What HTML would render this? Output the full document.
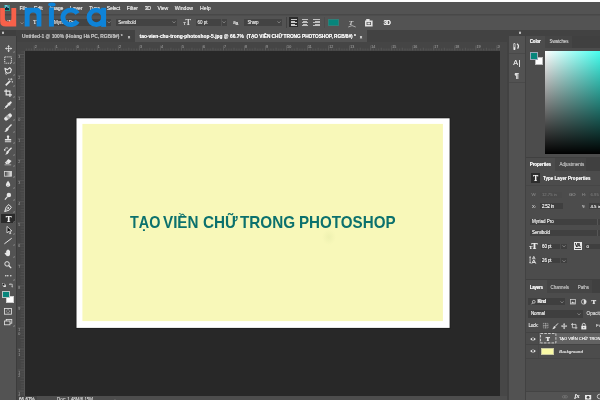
<!DOCTYPE html>
<html>
<head>
<meta charset="utf-8">
<title>Photoshop</title>
<style>
*{margin:0;padding:0;box-sizing:border-box;}
html,body{width:600px;height:400px;overflow:hidden;background:#fff;}
body{position:relative;font-family:"Liberation Sans",sans-serif;color:#ddd;}
#root{position:absolute;left:0;top:0;width:600px;height:400px;overflow:hidden;will-change:transform;}
.a{position:absolute;}
.t{position:absolute;white-space:nowrap;color:#d6d6d6;font-size:5.5px;text-shadow:0 0 0.6px currentColor;}
svg{overflow:visible;}
</style>
</head>
<body>
<div id="root">
<div class="a" style="left:0px;top:0px;width:600px;height:2px;background:#fff;"></div>
<div class="a" style="left:0px;top:2px;width:600px;height:398px;background:#535353;"></div>
<div class="a" style="left:0px;top:2px;width:600px;height:12.6px;background:#535353;"></div>
<div class="a" style="left:0px;top:14px;width:600px;height:1px;background:#484848;"></div>
<div class="a" style="left:0px;top:15px;width:600px;height:1px;background:#4d4d4d;"></div>
<div class="a" style="left:0px;top:15.5px;width:600px;height:14.5px;background:#535353;"></div>
<div class="t" style="left:19.4px;top:5.08px;font-size:5.2px;line-height:6.24px;color:#e6e6e6;letter-spacing:-0.095px;">File</div>
<div class="t" style="left:34.1px;top:5.08px;font-size:5.2px;line-height:6.24px;color:#e6e6e6;letter-spacing:-0.090px;">Edit</div>
<div class="t" style="left:49.4px;top:5.08px;font-size:5.2px;line-height:6.24px;color:#e6e6e6;letter-spacing:-0.111px;">Image</div>
<div class="t" style="left:70px;top:5.08px;font-size:5.2px;line-height:6.24px;color:#e6e6e6;letter-spacing:-0.102px;">Layer</div>
<div class="t" style="left:89.2px;top:5.08px;font-size:5.2px;line-height:6.24px;color:#e6e6e6;letter-spacing:-0.118px;">Type</div>
<div class="t" style="left:106.7px;top:5.08px;font-size:5.2px;line-height:6.24px;color:#e6e6e6;letter-spacing:-0.192px;">Select</div>
<div class="t" style="left:126.7px;top:5.08px;font-size:5.2px;line-height:6.24px;color:#e6e6e6;letter-spacing:-0.043px;">Filter</div>
<div class="t" style="left:144.7px;top:5.08px;font-size:5.2px;line-height:6.24px;color:#e6e6e6;letter-spacing:-0.274px;">3D</div>
<div class="t" style="left:157.5px;top:5.08px;font-size:5.2px;line-height:6.24px;color:#e6e6e6;letter-spacing:-0.094px;">View</div>
<div class="t" style="left:174.7px;top:5.08px;font-size:5.2px;line-height:6.24px;color:#e6e6e6;letter-spacing:-0.032px;">Window</div>
<div class="t" style="left:200px;top:5.08px;font-size:5.2px;line-height:6.24px;color:#e6e6e6;letter-spacing:0.026px;">Help</div>
<div class="a" style="left:4.2px;top:5px;width:5.6px;height:5.5px;background:#0a2d3e;border:0.8px solid #2a9488;"></div>
<div class="t" style="left:5.2px;top:5.88px;font-size:3.2px;line-height:3.84px;color:#7fd0f0;font-weight:bold;">Ps</div>
<div class="t" style="left:7.6px;top:17.70px;font-size:6.5px;line-height:7.80px;color:#d8d8d8;font-family:'Liberation Serif',serif;">T</div>
<svg class="a" style="left:19.6px;top:22.4px;" width="4" height="2.4" viewBox="0 0 4 2.4"><path d="M0.4 0.4 L2 1.9 L3.6 0.4" fill="none" stroke="#a4a4a4" stroke-width="0.6"/></svg>
<div class="t" style="left:33px;top:18.70px;font-size:6px;line-height:7.20px;color:#dcdcdc;font-family:'Liberation Serif',serif;">T</div>
<div class="a" style="left:50px;top:18.5px;width:61.2px;height:7.3px;background:#434343;"></div>
<div class="t" style="left:54px;top:19.60px;font-size:4.5px;line-height:5.40px;color:#dcdcdc;letter-spacing:0.004px;">Myriad Pro</div>
<svg class="a" style="left:106.5px;top:21.3px;" width="4" height="2.4" viewBox="0 0 4 2.4"><path d="M0.4 0.4 L2 1.9 L3.6 0.4" fill="none" stroke="#a4a4a4" stroke-width="0.6"/></svg>
<div class="a" style="left:115.8px;top:18.5px;width:61.2px;height:7.3px;background:#434343;"></div>
<div class="t" style="left:118.3px;top:19.60px;font-size:4.5px;line-height:5.40px;color:#dcdcdc;letter-spacing:-0.158px;">Semibold</div>
<svg class="a" style="left:172px;top:21.3px;" width="4" height="2.4" viewBox="0 0 4 2.4"><path d="M0.4 0.4 L2 1.9 L3.6 0.4" fill="none" stroke="#a4a4a4" stroke-width="0.6"/></svg>
<div class="t" style="left:183.2px;top:20.90px;font-size:4.5px;line-height:5.40px;color:#dcdcdc;font-family:'Liberation Serif',serif;">T</div>
<div class="t" style="left:185.6px;top:16.60px;font-size:9px;line-height:10.80px;color:#dcdcdc;font-family:'Liberation Serif',serif;">T</div>
<div class="a" style="left:195.8px;top:18.5px;width:25px;height:7.3px;background:#434343;"></div>
<div class="t" style="left:197.5px;top:19.60px;font-size:4.5px;line-height:5.40px;color:#dcdcdc;letter-spacing:-0.002px;">60 pt</div>
<div class="a" style="left:221.7px;top:18.5px;width:5px;height:7.3px;background:#434343;"></div>
<svg class="a" style="left:222.3px;top:21.3px;" width="4" height="2.4" viewBox="0 0 4 2.4"><path d="M0.4 0.4 L2 1.9 L3.6 0.4" fill="none" stroke="#a4a4a4" stroke-width="0.6"/></svg>
<div class="t" style="left:233px;top:19.00px;font-size:5px;line-height:6.00px;color:#cfcfcf;">a</div>
<div class="t" style="left:235.6px;top:20.00px;font-size:5px;line-height:6.00px;color:#cfcfcf;font-weight:bold;">a</div>
<div class="a" style="left:244.2px;top:18.5px;width:37.8px;height:7.3px;background:#434343;"></div>
<div class="t" style="left:247.5px;top:19.60px;font-size:4.5px;line-height:5.40px;color:#dcdcdc;letter-spacing:-0.242px;">Sharp</div>
<svg class="a" style="left:277px;top:21.3px;" width="4" height="2.4" viewBox="0 0 4 2.4"><path d="M0.4 0.4 L2 1.9 L3.6 0.4" fill="none" stroke="#a4a4a4" stroke-width="0.6"/></svg>
<div class="a" style="left:285.6px;top:16.5px;width:0.8px;height:11px;background:#424242;"></div>
<div class="a" style="left:289.2px;top:16.7px;width:9.1px;height:10.8px;background:#2c2c2c;"></div>
<div class="a" style="left:291px;top:19.2px;width:6px;height:0.9px;background:#c8c8c8;"></div>
<div class="a" style="left:291px;top:20.7px;width:4px;height:0.9px;background:#c8c8c8;"></div>
<div class="a" style="left:291px;top:22.2px;width:6px;height:0.9px;background:#c8c8c8;"></div>
<div class="a" style="left:291px;top:23.7px;width:4px;height:0.9px;background:#c8c8c8;"></div>
<div class="a" style="left:291px;top:25.2px;width:6px;height:0.9px;background:#c8c8c8;"></div>
<div class="a" style="left:301.8px;top:19.2px;width:6.4px;height:0.9px;background:#c0c0c0;"></div>
<div class="a" style="left:302.8px;top:20.7px;width:4.4px;height:0.9px;background:#c0c0c0;"></div>
<div class="a" style="left:301.8px;top:22.2px;width:6.4px;height:0.9px;background:#c0c0c0;"></div>
<div class="a" style="left:302.8px;top:23.7px;width:4.4px;height:0.9px;background:#c0c0c0;"></div>
<div class="a" style="left:301.8px;top:25.2px;width:6.4px;height:0.9px;background:#c0c0c0;"></div>
<div class="a" style="left:313.4px;top:19.2px;width:6.4px;height:0.9px;background:#c0c0c0;"></div>
<div class="a" style="left:315.4px;top:20.7px;width:4.4px;height:0.9px;background:#c0c0c0;"></div>
<div class="a" style="left:313.4px;top:22.2px;width:6.4px;height:0.9px;background:#c0c0c0;"></div>
<div class="a" style="left:315.4px;top:23.7px;width:4.4px;height:0.9px;background:#c0c0c0;"></div>
<div class="a" style="left:313.4px;top:25.2px;width:6.4px;height:0.9px;background:#c0c0c0;"></div>
<div class="a" style="left:324px;top:16.5px;width:0.6px;height:11px;background:#4c4c4c;"></div>
<div class="a" style="left:328px;top:18.8px;width:11.1px;height:7.3px;background:#06857b;border:0.5px solid #2f7f78;"></div>
<div class="t" style="left:349px;top:18.60px;font-size:7px;line-height:8.40px;color:#cfcfcf;font-family:'Liberation Serif',serif;font-style:italic;">T</div>
<svg class="a" style="left:347.5px;top:24.5px;" width="8" height="2.5" viewBox="0 0 8 2.5"><path d="M0.3 2 Q4 -0.8 7.7 2" fill="none" stroke="#cfcfcf" stroke-width="0.7"/></svg>
<svg class="a" style="left:365px;top:19.3px;" width="7.6" height="7.4" viewBox="0 0 7.6 7.4"><path d="M1.2 0 h3.4 v1.4 h3 v6 h-7.6 v-6 h1.2z" fill="#e2e2e2"/><rect x="1.6" y="3" width="4.4" height="3" fill="#535353"/><rect x="2.4" y="3.6" width="2.8" height="1.8" fill="#e2e2e2"/></svg>
<div class="t" style="left:383.4px;top:18.86px;font-size:6.4px;line-height:7.68px;color:#e6e6e6;font-weight:bold;letter-spacing:-0.591px;">3D</div>
<div class="a" style="left:0px;top:30px;width:600px;height:12px;background:#424242;"></div>
<div class="a" style="left:0px;top:30px;width:16.3px;height:5.5px;background:#3f3f3f;"></div>
<div class="a" style="left:135px;top:30.3px;width:232px;height:11.7px;background:#535353;"></div>
<div class="t" style="left:22px;top:34.06px;font-size:4.9px;line-height:5.88px;color:#b8b8b8;font-weight:bold;letter-spacing:-0.029px;">Untitled-1 @ 100% (Hoàng Hà PC, RGB/8#) *</div>
<div class="t" style="left:127.4px;top:33.78px;font-size:5.2px;line-height:6.24px;color:#d0d0d0;">×</div>
<div class="t" style="left:139.6px;top:34.06px;font-size:4.9px;line-height:5.88px;color:#f4f4f4;font-weight:bold;letter-spacing:-0.007px;">tao-vien-chu-trong-photoshop-5.jpg @ 66.7%</div>
<div class="t" style="left:246.5px;top:34.12px;font-size:4.8px;line-height:5.76px;color:#f4f4f4;font-weight:bold;letter-spacing:-0.050px;">(TẠO VIỀN CHỮ TRONG PHOTOSHOP, RGB/8#) *</div>
<div class="t" style="left:359.4px;top:33.78px;font-size:5.2px;line-height:6.24px;color:#e0e0e0;">×</div>
<div class="t" style="left:1.8px;top:30.30px;font-size:4.5px;line-height:5.40px;color:#d0d0d0;font-weight:bold;">»</div>
<div class="a" style="left:16.8px;top:42px;width:483.2px;height:8.7px;background:#454545;"></div>
<div class="a" style="left:16.8px;top:42px;width:8px;height:353.5px;background:#454545;"></div>
<svg class="a" style="left:0px;top:0px;" width="600" height="400" viewBox="0 0 600 400"><defs><pattern id="hp" x="75.80" y="42" width="21.03" height="9" patternUnits="userSpaceOnUse"><rect x="0.000" y="3.5" width="0.9" height="5" fill="#5e5e5e"/><rect x="2.629" y="6.6" width="0.9" height="1.9" fill="#585858"/><rect x="5.258" y="6.6" width="0.9" height="1.9" fill="#585858"/><rect x="7.886" y="6.6" width="0.9" height="1.9" fill="#585858"/><rect x="10.515" y="5.8" width="0.9" height="2.7" fill="#585858"/><rect x="13.144" y="6.6" width="0.9" height="1.9" fill="#585858"/><rect x="15.773" y="6.6" width="0.9" height="1.9" fill="#585858"/><rect x="18.401" y="6.6" width="0.9" height="1.9" fill="#585858"/></pattern><pattern id="vp" x="16.8" y="117.20" width="8" height="21.03" patternUnits="userSpaceOnUse"><rect y="0.000" x="1" height="0.9" width="7" fill="#595959"/><rect y="2.629" x="4.2" height="0.9" width="3.8" fill="#525252"/><rect y="5.258" x="4.2" height="0.9" width="3.8" fill="#525252"/><rect y="7.886" x="4.2" height="0.9" width="3.8" fill="#525252"/><rect y="10.515" x="3.4" height="0.9" width="4.6" fill="#525252"/><rect y="13.144" x="4.2" height="0.9" width="3.8" fill="#525252"/><rect y="15.773" x="4.2" height="0.9" width="3.8" fill="#525252"/><rect y="18.401" x="4.2" height="0.9" width="3.8" fill="#525252"/></pattern></defs><rect x="25.4" y="42" width="474.6" height="8.7" fill="url(#hp)"/><rect x="16.8" y="51.4" width="8" height="344" fill="url(#vp)"/></svg>
<div class="a" style="left:24.3px;top:51px;width:0.6px;height:344.8px;background:#555555;"></div>
<div class="t" style="left:34.7px;top:44.78px;font-size:3.7px;line-height:4.44px;color:#8a8a8a;">2</div>
<div class="t" style="left:55.8px;top:44.78px;font-size:3.7px;line-height:4.44px;color:#8a8a8a;">1</div>
<div class="t" style="left:76.8px;top:44.78px;font-size:3.7px;line-height:4.44px;color:#8a8a8a;">0</div>
<div class="t" style="left:97.8px;top:44.78px;font-size:3.7px;line-height:4.44px;color:#8a8a8a;">1</div>
<div class="t" style="left:118.9px;top:44.78px;font-size:3.7px;line-height:4.44px;color:#8a8a8a;">2</div>
<div class="t" style="left:139.9px;top:44.78px;font-size:3.7px;line-height:4.44px;color:#8a8a8a;">3</div>
<div class="t" style="left:160.9px;top:44.78px;font-size:3.7px;line-height:4.44px;color:#8a8a8a;">4</div>
<div class="t" style="left:182.0px;top:44.78px;font-size:3.7px;line-height:4.44px;color:#8a8a8a;">5</div>
<div class="t" style="left:203.0px;top:44.78px;font-size:3.7px;line-height:4.44px;color:#8a8a8a;">6</div>
<div class="t" style="left:224.0px;top:44.78px;font-size:3.7px;line-height:4.44px;color:#8a8a8a;">7</div>
<div class="t" style="left:245.0px;top:44.78px;font-size:3.7px;line-height:4.44px;color:#8a8a8a;">8</div>
<div class="t" style="left:266.1px;top:44.78px;font-size:3.7px;line-height:4.44px;color:#8a8a8a;">9</div>
<div class="t" style="left:287.1px;top:44.78px;font-size:3.7px;line-height:4.44px;color:#8a8a8a;">10</div>
<div class="t" style="left:308.1px;top:44.78px;font-size:3.7px;line-height:4.44px;color:#8a8a8a;">11</div>
<div class="t" style="left:329.2px;top:44.78px;font-size:3.7px;line-height:4.44px;color:#8a8a8a;">12</div>
<div class="t" style="left:350.2px;top:44.78px;font-size:3.7px;line-height:4.44px;color:#8a8a8a;">13</div>
<div class="t" style="left:371.2px;top:44.78px;font-size:3.7px;line-height:4.44px;color:#8a8a8a;">14</div>
<div class="t" style="left:392.3px;top:44.78px;font-size:3.7px;line-height:4.44px;color:#8a8a8a;">15</div>
<div class="t" style="left:413.3px;top:44.78px;font-size:3.7px;line-height:4.44px;color:#8a8a8a;">16</div>
<div class="t" style="left:434.3px;top:44.78px;font-size:3.7px;line-height:4.44px;color:#8a8a8a;">17</div>
<div class="t" style="left:455.3px;top:44.78px;font-size:3.7px;line-height:4.44px;color:#8a8a8a;">18</div>
<div class="t" style="left:476.4px;top:44.78px;font-size:3.7px;line-height:4.44px;color:#8a8a8a;">19</div>
<div class="t" style="left:497.4px;top:44.78px;font-size:3.7px;line-height:4.44px;color:#8a8a8a;">20</div>
<div class="t" style="left:18.2px;top:55.08px;font-size:3.7px;line-height:4.44px;color:#858585;">3</div>
<div class="t" style="left:18.2px;top:76.08px;font-size:3.7px;line-height:4.44px;color:#858585;">2</div>
<div class="t" style="left:18.2px;top:97.18px;font-size:3.7px;line-height:4.44px;color:#858585;">1</div>
<div class="t" style="left:18.2px;top:118.18px;font-size:3.7px;line-height:4.44px;color:#858585;">0</div>
<div class="t" style="left:18.2px;top:139.18px;font-size:3.7px;line-height:4.44px;color:#858585;">1</div>
<div class="t" style="left:18.2px;top:160.28px;font-size:3.7px;line-height:4.44px;color:#858585;">2</div>
<div class="t" style="left:18.2px;top:181.28px;font-size:3.7px;line-height:4.44px;color:#858585;">3</div>
<div class="t" style="left:18.2px;top:202.28px;font-size:3.7px;line-height:4.44px;color:#858585;">4</div>
<div class="t" style="left:18.2px;top:223.38px;font-size:3.7px;line-height:4.44px;color:#858585;">5</div>
<div class="t" style="left:18.2px;top:244.38px;font-size:3.7px;line-height:4.44px;color:#858585;">6</div>
<div class="t" style="left:18.2px;top:265.38px;font-size:3.7px;line-height:4.44px;color:#858585;">7</div>
<div class="t" style="left:18.2px;top:286.38px;font-size:3.7px;line-height:4.44px;color:#858585;">8</div>
<div class="t" style="left:18.2px;top:307.48px;font-size:3.7px;line-height:4.44px;color:#858585;">9</div>
<div class="t" style="left:18.2px;top:328.48px;font-size:3.7px;line-height:4.44px;color:#858585;">1</div>
<div class="t" style="left:18.2px;top:331.78px;font-size:3.7px;line-height:4.44px;color:#858585;">0</div>
<div class="t" style="left:18.2px;top:349.48px;font-size:3.7px;line-height:4.44px;color:#858585;">1</div>
<div class="t" style="left:18.2px;top:352.78px;font-size:3.7px;line-height:4.44px;color:#858585;">1</div>
<div class="t" style="left:18.2px;top:370.58px;font-size:3.7px;line-height:4.44px;color:#858585;">1</div>
<div class="t" style="left:18.2px;top:373.88px;font-size:3.7px;line-height:4.44px;color:#858585;">2</div>
<div class="t" style="left:18.2px;top:391.58px;font-size:3.7px;line-height:4.44px;color:#858585;">1</div>
<div class="t" style="left:18.2px;top:394.88px;font-size:3.7px;line-height:4.44px;color:#858585;">3</div>
<div class="a" style="left:25px;top:51px;width:475px;height:345px;background:#282828;"></div>
<div class="a" style="left:500px;top:42px;width:7px;height:353.5px;background:#474747;"></div>
<div class="a" style="left:16.8px;top:395.8px;width:490.2px;height:4.2px;background:#4d4d4d;"></div>
<div class="a" style="left:16.8px;top:395.8px;width:20px;height:4.2px;background:#444444;"></div>
<div class="t" style="left:19px;top:396.94px;font-size:4.6px;line-height:5.52px;color:#e0e0e0;">66.67%</div>
<div class="t" style="left:57px;top:397.00px;font-size:4.5px;line-height:5.40px;color:#c8c8c8;letter-spacing:-0.048px;">Doc: 1.48M/6.15M</div>
<div class="t" style="left:114.5px;top:396.50px;font-size:5px;line-height:6.00px;color:#c8c8c8;">›</div>
<svg class="a" style="left:0px;top:0px;" width="600" height="400" viewBox="0 0 600 400"><rect x="75.7" y="117.5" width="374.7" height="211.2" fill="#1c1c1c"/><rect x="76.5" y="118.3" width="373.1" height="209.6" fill="#ffffff"/><rect x="82.4" y="123.9" width="360.5" height="197.2" fill="#f8f8b9"/></svg>
<div class="a" style="left:322px;top:229px;width:14px;height:16px;background:radial-gradient(closest-side, rgba(205,218,150,0.22), rgba(205,218,150,0) 100%);"></div>
<div class="a" style="left:129.70px;top:212.8px;font-weight:bold;font-size:16.6px;line-height:20px;color:#0c716d;white-space:nowrap;transform-origin:0 50%;transform:scaleX(0.8676);">TẠO</div>
<div class="a" style="left:163.10px;top:212.8px;font-weight:bold;font-size:16.6px;line-height:20px;color:#0c716d;white-space:nowrap;transform-origin:0 50%;transform:scaleX(0.9162);">VIỀN</div>
<div class="a" style="left:202.90px;top:212.8px;font-weight:bold;font-size:16.6px;line-height:20px;color:#0c716d;white-space:nowrap;transform-origin:0 50%;transform:scaleX(0.9193);">CHỮ</div>
<div class="a" style="left:239.90px;top:212.8px;font-weight:bold;font-size:16.6px;line-height:20px;color:#0c716d;white-space:nowrap;transform-origin:0 50%;transform:scaleX(0.9209);">TRONG</div>
<div class="a" style="left:298.50px;top:212.8px;font-weight:bold;font-size:16.6px;line-height:20px;color:#0c716d;white-space:nowrap;transform-origin:0 50%;transform:scaleX(0.9133);">PHOTOSHOP</div>
<div class="a" style="left:507px;top:30px;width:93px;height:370px;background:#424242;"></div>
<div class="a" style="left:508.5px;top:30px;width:16.5px;height:5.7px;background:#424242;"></div>
<div class="a" style="left:508.5px;top:35.7px;width:16.4px;height:364.3px;background:#525252;"></div>
<div class="t" style="left:518.8px;top:30.10px;font-size:4.5px;line-height:5.40px;color:#d0d0d0;font-weight:bold;">»</div>
<div class="a" style="left:508.5px;top:52.9px;width:16.4px;height:0.7px;background:#494949;"></div>
<div class="a" style="left:508.5px;top:81.5px;width:16.4px;height:0.7px;background:#494949;"></div>
<svg class="a" style="left:513.4px;top:42.6px;" width="6.4" height="7" viewBox="0 0 6.4 7"><rect x="0.4" y="0.3" width="2" height="6.6" rx="0.6" fill="#ececec"/><rect x="0.8" y="1" width="1.2" height="3.2" fill="#8a8a8a"/><path d="M4 0.8 Q6.6 2.6 4.6 5.6" fill="none" stroke="#ececec" stroke-width="1.3"/></svg>
<div class="t" style="left:513.3px;top:59.18px;font-size:7.2px;line-height:8.64px;color:#e0e0e0;">A</div>
<div class="a" style="left:518.9px;top:60px;width:0.7px;height:6.6px;background:#e0e0e0;"></div>
<div class="t" style="left:514.6px;top:70.80px;font-size:8px;line-height:9.60px;color:#e0e0e0;font-weight:bold;">¶</div>
<div class="a" style="left:526.1px;top:30px;width:73.9px;height:5.7px;background:#424242;"></div>
<div class="a" style="left:526.1px;top:35.7px;width:73.9px;height:364.3px;background:#4c4c4c;"></div>
<div class="a" style="left:526.1px;top:35.7px;width:73.9px;height:12px;background:#404040;"></div>
<div class="a" style="left:545.4px;top:35.7px;width:26.6px;height:12px;background:#454545;"></div>
<div class="a" style="left:526.1px;top:35.7px;width:18.9px;height:12px;background:#4c4c4c;"></div>
<div class="t" style="left:529.7px;top:38.80px;font-size:4.5px;line-height:5.40px;color:#f2f2f2;font-weight:bold;letter-spacing:-0.150px;">Color</div>
<div class="t" style="left:549.5px;top:38.90px;font-size:4.5px;line-height:5.40px;color:#c4c4c4;letter-spacing:-0.064px;">Swatches</div>
<div class="a" style="left:534.6px;top:56.8px;width:8px;height:8px;background:#ffffff;border:0.5px solid #bbb;"></div>
<div class="a" style="left:529.8px;top:52px;width:8px;height:7.8px;background:#06857b;border:0.7px solid #9ab;"></div>
<div class="a" style="left:545.3px;top:50.7px;width:54.7px;height:103px;background:linear-gradient(to bottom, rgba(0,0,0,0) 0%, rgba(0,0,0,1) 100%), linear-gradient(to right, #ffffff 0px, #00ffe8 76px);"></div>
<div class="a" style="left:526.1px;top:156.8px;width:73.9px;height:1.2px;background:#404040;"></div>
<div class="a" style="left:526.1px;top:158px;width:73.9px;height:12.5px;background:#404040;"></div>
<div class="a" style="left:555.3px;top:158px;width:31px;height:12.5px;background:#454545;"></div>
<div class="a" style="left:526.1px;top:158px;width:28.5px;height:12.5px;background:#4c4c4c;"></div>
<div class="t" style="left:529.8px;top:161.80px;font-size:4.5px;line-height:5.40px;color:#f2f2f2;font-weight:bold;letter-spacing:-0.106px;">Properties</div>
<div class="t" style="left:559.4px;top:161.80px;font-size:4.5px;line-height:5.40px;color:#bcbcbc;letter-spacing:0.003px;">Adjustments</div>
<div class="a" style="left:531.2px;top:173.4px;width:8.8px;height:9.4px;background:#2d2d2d;"></div>
<div class="t" style="left:533.1px;top:173.62px;font-size:7.8px;line-height:9.36px;color:#f4f4f4;font-family:'Liberation Serif',serif;font-weight:bold;">T</div>
<div class="t" style="left:543px;top:175.90px;font-size:4.5px;line-height:5.40px;color:#f0f0f0;font-weight:bold;letter-spacing:0.032px;">Type Layer Properties</div>
<div class="a" style="left:526.1px;top:184.9px;width:73.9px;height:0.7px;background:#464646;"></div>
<div class="t" style="left:531.4px;top:192.08px;font-size:4.2px;line-height:5.04px;color:#7c7c7c;">W:</div>
<div class="a" style="left:540.2px;top:191.8px;width:21.6px;height:5.8px;background:#4a4a4a;"></div>
<div class="t" style="left:542px;top:192.08px;font-size:4.2px;line-height:5.04px;color:#6f6f6f;">12.75 in</div>
<div class="t" style="left:569px;top:192.08px;font-size:4.2px;line-height:5.04px;color:#8a8a8a;">GO</div>
<div class="t" style="left:581.8px;top:192.08px;font-size:4.2px;line-height:5.04px;color:#7c7c7c;">H:</div>
<div class="a" style="left:589px;top:191.8px;width:11px;height:5.8px;background:#4a4a4a;"></div>
<div class="t" style="left:590.6px;top:192.08px;font-size:4.2px;line-height:5.04px;color:#6f6f6f;">6.95</div>
<div class="t" style="left:532px;top:203.68px;font-size:4.2px;line-height:5.04px;color:#c8c8c8;">X:</div>
<div class="a" style="left:540.2px;top:203.2px;width:22.4px;height:5.8px;background:#3f3f3f;"></div>
<div class="t" style="left:542.1px;top:203.50px;font-size:4.5px;line-height:5.40px;color:#ececec;letter-spacing:-0.259px;">2.52 in</div>
<div class="t" style="left:581.8px;top:203.68px;font-size:4.2px;line-height:5.04px;color:#c8c8c8;">Y:</div>
<div class="a" style="left:589px;top:203.2px;width:11px;height:5.8px;background:#3f3f3f;"></div>
<div class="t" style="left:590.4px;top:203.56px;font-size:4.4px;line-height:5.28px;color:#e6e6e6;">4.5 in</div>
<div class="a" style="left:529.8px;top:218.9px;width:70.2px;height:6.3px;background:#404040;"></div>
<div class="t" style="left:532px;top:219.40px;font-size:4.5px;line-height:5.40px;color:#e8e8e8;letter-spacing:0.004px;">Myriad Pro</div>
<div class="a" style="left:597px;top:218.9px;width:0.5px;height:6.3px;background:#555;"></div>
<div class="a" style="left:529.8px;top:229.9px;width:70.2px;height:6.3px;background:#404040;"></div>
<div class="t" style="left:532px;top:230.40px;font-size:4.5px;line-height:5.40px;color:#e8e8e8;letter-spacing:-0.120px;">Semibold</div>
<div class="a" style="left:597px;top:229.9px;width:0.5px;height:6.3px;background:#555;"></div>
<div class="t" style="left:529.3px;top:245.04px;font-size:4.6px;line-height:5.52px;color:#ececec;font-family:'Liberation Serif',serif;font-weight:bold;">T</div>
<div class="t" style="left:531.4px;top:240.60px;font-size:9px;line-height:10.80px;color:#ececec;font-family:'Liberation Serif',serif;font-weight:bold;">T</div>
<div class="a" style="left:540.5px;top:243.6px;width:19px;height:5.6px;background:#3f3f3f;"></div>
<div class="t" style="left:542.1px;top:243.80px;font-size:4.5px;line-height:5.40px;color:#ececec;letter-spacing:-0.142px;">60 pt</div>
<div class="a" style="left:561px;top:243.6px;width:5.6px;height:5.6px;background:#3f3f3f;"></div>
<svg class="a" style="left:561.8px;top:245.4px;" width="4" height="2.4" viewBox="0 0 4 2.4"><path d="M0.4 0.4 L2 1.9 L3.6 0.4" fill="none" stroke="#a4a4a4" stroke-width="0.6"/></svg>
<div class="a" style="left:574.1px;top:242.4px;width:8px;height:7.6px;background:#e8e8e8;"></div>
<div class="t" style="left:574.9px;top:242.84px;font-size:4.6px;line-height:5.52px;color:#333;font-weight:bold;letter-spacing:-0.3px;">VA</div>
<div class="a" style="left:575px;top:248.2px;width:6.2px;height:0.7px;background:#444;"></div>
<div class="a" style="left:585px;top:243.6px;width:15px;height:5.6px;background:#3f3f3f;"></div>
<div class="t" style="left:586.6px;top:243.86px;font-size:4.4px;line-height:5.28px;color:#e6e6e6;">0</div>
<svg class="a" style="left:529.4px;top:256.2px;" width="7.6" height="7.8" viewBox="0 0 7.6 7.8"><path d="M1.1 1 V6.8" stroke="#e6e6e6" stroke-width="0.7"/><path d="M1.1 0 L2.1 1.5 H0.1z M1.1 7.8 L2.1 6.3 H0.1z" fill="#e6e6e6"/><path d="M3.4 3.2 L4.8 0.3 L6.2 3.2 M3.9 2.2 H5.7" stroke="#e6e6e6" stroke-width="0.8" fill="none"/><path d="M2.8 7.6 L4.8 3.8 L6.8 7.6 M3.5 6.4 H6.1" stroke="#e6e6e6" stroke-width="1" fill="none"/></svg>
<div class="a" style="left:540.5px;top:257.8px;width:19px;height:5.6px;background:#3f3f3f;"></div>
<div class="t" style="left:542.1px;top:258.00px;font-size:4.5px;line-height:5.40px;color:#ececec;letter-spacing:-0.142px;">26 pt</div>
<div class="a" style="left:561px;top:257.8px;width:5.6px;height:5.6px;background:#3f3f3f;"></div>
<svg class="a" style="left:561.8px;top:259.6px;" width="4" height="2.4" viewBox="0 0 4 2.4"><path d="M0.4 0.4 L2 1.9 L3.6 0.4" fill="none" stroke="#a4a4a4" stroke-width="0.6"/></svg>
<div class="a" style="left:526.1px;top:278.8px;width:73.9px;height:1.2px;background:#404040;"></div>
<div class="a" style="left:526.1px;top:280px;width:73.9px;height:12.8px;background:#404040;"></div>
<div class="a" style="left:547.4px;top:280px;width:24.4px;height:12.8px;background:#454545;"></div>
<div class="a" style="left:572.2px;top:280px;width:19.6px;height:12.8px;background:#454545;"></div>
<div class="a" style="left:526.1px;top:280px;width:20.6px;height:12.8px;background:#4c4c4c;"></div>
<div class="t" style="left:529.7px;top:284.60px;font-size:4.5px;line-height:5.40px;color:#f2f2f2;font-weight:bold;letter-spacing:-0.252px;">Layers</div>
<div class="t" style="left:550.6px;top:284.50px;font-size:4.5px;line-height:5.40px;color:#bcbcbc;letter-spacing:-0.077px;">Channels</div>
<div class="t" style="left:577.8px;top:284.50px;font-size:4.5px;line-height:5.40px;color:#bcbcbc;letter-spacing:-0.061px;">Paths</div>
<div class="a" style="left:528.3px;top:297.8px;width:36.7px;height:7px;background:#3f3f3f;"></div>
<svg class="a" style="left:530.6px;top:299.6px;" width="4.6" height="4.6" viewBox="0 0 4.6 4.6"><circle cx="2.8" cy="1.8" r="1.4" fill="none" stroke="#e0e0e0" stroke-width="0.7"/><path d="M1.8 2.8 L0.4 4.3" stroke="#e0e0e0" stroke-width="0.8"/></svg>
<div class="t" style="left:537.5px;top:298.70px;font-size:4.5px;line-height:5.40px;color:#ececec;font-weight:bold;letter-spacing:-0.424px;">Kind</div>
<svg class="a" style="left:560px;top:300.8px;" width="4" height="2.4" viewBox="0 0 4 2.4"><path d="M0.4 0.4 L2 1.9 L3.6 0.4" fill="none" stroke="#a4a4a4" stroke-width="0.6"/></svg>
<svg class="a" style="left:570.2px;top:298.8px;" width="6" height="5.6" viewBox="0 0 6 5.6"><rect x="0.4" y="0.6" width="5.2" height="4.4" fill="none" stroke="#dcdcdc" stroke-width="0.7"/><path d="M1 4.4 L2.4 2.6 L3.4 3.6 L4.2 3 L5 4.4z" fill="#dcdcdc"/></svg>
<svg class="a" style="left:580.6px;top:298.8px;" width="5.6" height="5.6" viewBox="0 0 5.6 5.6"><circle cx="2.8" cy="2.8" r="2.4" fill="none" stroke="#e0e0e0" stroke-width="0.7"/><path d="M2.8 0.4 A2.4 2.4 0 0 1 2.8 5.2z" fill="#e0e0e0"/></svg>
<div class="t" style="left:591.6px;top:297.60px;font-size:7px;line-height:8.40px;color:#e6e6e6;font-family:'Liberation Serif',serif;font-weight:bold;">T</div>
<div class="a" style="left:528.3px;top:310.2px;width:54.3px;height:7.6px;background:#3f3f3f;"></div>
<div class="t" style="left:530.9px;top:311.40px;font-size:4.5px;line-height:5.40px;color:#ececec;letter-spacing:-0.117px;">Normal</div>
<svg class="a" style="left:577.4px;top:313.2px;" width="4" height="2.4" viewBox="0 0 4 2.4"><path d="M0.4 0.4 L2 1.9 L3.6 0.4" fill="none" stroke="#a4a4a4" stroke-width="0.6"/></svg>
<div class="t" style="left:586.6px;top:311.34px;font-size:4.6px;line-height:5.52px;color:#d2d2d2;">Opacity:</div>
<div class="t" style="left:528.4px;top:323.30px;font-size:4.5px;line-height:5.40px;color:#e2e2e2;letter-spacing:-0.151px;">Lock:</div>
<svg class="a" style="left:542.6px;top:323.4px;" width="5.4" height="5.4" viewBox="0 0 5.4 5.4"><rect x="0.4" y="0.4" width="4.6" height="4.6" fill="none" stroke="#cfcfcf" stroke-width="0.6" stroke-dasharray="1 0.6"/><path d="M2.7 0.4 V5 M0.4 2.7 H5" stroke="#cfcfcf" stroke-width="0.5"/></svg>
<svg class="a" style="left:552px;top:322.8px;" width="6.4" height="6.4" viewBox="0 0 6.4 6.4"><path d="M6 0.4 L3 3.6" stroke="#e0e0e0" stroke-width="1" fill="none"/><path d="M2.6 3 L3.8 4.2 Q2.6 6 0.2 6.2 Q1.4 5 1.6 3.8z" fill="#e0e0e0"/></svg>
<svg class="a" style="left:561.4px;top:322.9px;" width="6.2" height="6.2" viewBox="0 0 6.2 6.2"><path d="M3.1 0 L4.2 1.4 H3.5 V2.7 H4.8 V2 L6.2 3.1 L4.8 4.2 V3.5 H3.5 V4.8 H4.2 L3.1 6.2 L2 4.8 H2.7 V3.5 H1.4 V4.2 L0 3.1 L1.4 2 V2.7 H2.7 V1.4 H2z" fill="#e6e6e6"/></svg>
<svg class="a" style="left:571px;top:323px;" width="6.4" height="6.2" viewBox="0 0 6.4 6.2"><path d="M1.4 0 V4.8 H6.4 M0 1.4 H5 V6.2" fill="none" stroke="#dcdcdc" stroke-width="0.8"/></svg>
<svg class="a" style="left:581px;top:322.6px;" width="5.6" height="6.6" viewBox="0 0 5.6 6.6"><rect x="0.3" y="2.8" width="5" height="3.6" fill="#ececec"/><path d="M1.3 2.8 V1.8 A1.5 1.5 0 0 1 4.3 1.8 V2.8" fill="none" stroke="#ececec" stroke-width="0.8"/><rect x="2.3" y="4" width="1" height="1.2" fill="#555"/></svg>
<div class="t" style="left:596px;top:323.36px;font-size:4.4px;line-height:5.28px;color:#cfcfcf;">Fill:</div>
<div class="a" style="left:526.1px;top:332.4px;width:73.9px;height:0.5px;background:#434343;"></div>
<div class="a" style="left:538.8px;top:332.6px;width:61.2px;height:11.8px;background:#626262;"></div>
<div class="a" style="left:538.4px;top:332.9px;width:0.5px;height:25px;background:#484848;"></div>
<svg class="a" style="left:529.5px;top:336.8px;" width="6" height="4" viewBox="0 0 6 4"><path d="M0.2 2 Q3 -1.2 5.8 2 Q3 5.2 0.2 2z" fill="#f0f0f0"/><circle cx="3" cy="2" r="1.15" fill="#444"/><circle cx="3" cy="2" r="0.5" fill="#f0f0f0"/></svg>
<svg class="a" style="left:539.6px;top:333.4px;" width="16.4" height="10.4" viewBox="0 0 16.4 10.4"><rect x="0.5" y="0.5" width="15.4" height="9.4" fill="#5a5a5a" stroke="#e4e4e4" stroke-width="0.8" stroke-dasharray="2.6 1.2"/></svg>
<div class="t" style="left:545.8px;top:334.76px;font-size:6.4px;line-height:7.68px;color:#f4f4f4;font-family:'Liberation Serif',serif;font-weight:bold;">T</div>
<div class="t" style="left:558.9px;top:336.74px;font-size:4.1px;line-height:4.92px;color:#f0f0f0;letter-spacing:-0.046px;">TẠO VIỀN CHỮ TRON</div>
<div class="a" style="left:526.1px;top:344.4px;width:73.9px;height:0.5px;background:#434343;"></div>
<svg class="a" style="left:529.5px;top:349.3px;" width="6" height="4" viewBox="0 0 6 4"><path d="M0.2 2 Q3 -1.2 5.8 2 Q3 5.2 0.2 2z" fill="#f0f0f0"/><circle cx="3" cy="2" r="1.15" fill="#444"/><circle cx="3" cy="2" r="0.5" fill="#f0f0f0"/></svg>
<div class="a" style="left:541.2px;top:347.6px;width:13.2px;height:7.4px;background:#f9f9a6;border:0.5px solid #c8c8a0;"></div>
<div class="t" style="left:559.2px;top:349.22px;font-size:4.3px;line-height:5.16px;color:#e2e2e2;font-style:italic;letter-spacing:0.075px;">Background</div>
<div class="a" style="left:526.1px;top:357.6px;width:73.9px;height:0.5px;background:#454545;"></div>
<div class="a" style="left:526.1px;top:391.6px;width:73.9px;height:8.4px;background:#535353;"></div>
<div class="a" style="left:526.1px;top:391.4px;width:73.9px;height:0.5px;background:#444;"></div>
<svg class="a" style="left:562.2px;top:394.8px;" width="6" height="3.6" viewBox="0 0 6 3.6"><rect x="0.4" y="0.6" width="2.8" height="2.4" rx="1.2" fill="none" stroke="#7a7a7a" stroke-width="0.7"/><rect x="2.6" y="0.6" width="2.8" height="2.4" rx="1.2" fill="none" stroke="#7a7a7a" stroke-width="0.7"/></svg>
<div class="t" style="left:574.6px;top:393.00px;font-size:6px;line-height:7.20px;color:#e6e6e6;font-family:'Liberation Serif',serif;font-style:italic;font-weight:bold;">fx</div>
<svg class="a" style="left:585px;top:394.7px;" width="6.2" height="4.6" viewBox="0 0 6.2 4.6"><rect x="0" y="0" width="6.2" height="4.6" fill="#ececec"/><circle cx="3.1" cy="2.3" r="1.4" fill="#444"/></svg>
<svg class="a" style="left:597.4px;top:394.2px;" width="5" height="5" viewBox="0 0 5 5"><circle cx="2.5" cy="2.5" r="2.2" fill="none" stroke="#e0e0e0" stroke-width="0.8"/></svg>
<div class="a" style="left:0px;top:35.5px;width:16.3px;height:364.5px;background:#535353;"></div>
<div class="a" style="left:16.3px;top:35.5px;width:0.5px;height:364.5px;background:#3c3c3c;"></div>
<svg class="a" style="left:4.5px;top:44.7px;" width="7.2" height="7.2" viewBox="0 0 9 9"><path d="M4.5 1.4 V7.6 M1.4 4.5 H7.6" stroke="#e6e6e6" stroke-width="1"/><path d="M4.5 0 L6.1 2.1 H2.9z M4.5 9 L6.1 6.9 H2.9z M0 4.5 L2.1 2.9 V6.1z M9 4.5 L6.9 2.9 V6.1z" fill="#e6e6e6"/></svg>
<svg class="a" style="left:12.8px;top:51.099999999999994px;" width="1.5" height="1.5" viewBox="0 0 1.5 1.5"><path d="M1.5 0 V1.5 H0z" fill="#a8a8a8"/></svg>
<svg class="a" style="left:4.25px;top:55.55px;" width="8.1" height="8.1" viewBox="0 0 9 9"><rect x="0.8" y="1" width="7.4" height="7" fill="none" stroke="#e6e6e6" stroke-width="1.1" stroke-dasharray="1.2 0.9"/></svg>
<svg class="a" style="left:12.8px;top:62.4px;" width="1.5" height="1.5" viewBox="0 0 1.5 1.5"><path d="M1.5 0 V1.5 H0z" fill="#a8a8a8"/></svg>
<svg class="a" style="left:4.35px;top:66.75px;" width="8.1" height="8.1" viewBox="0 0 9 9"><path d="M1 1.4 L3.8 3 L6.4 0.8 L8.2 2.8 L7.2 6 L3.8 7 L2 5.4z" fill="none" stroke="#e6e6e6" stroke-width="1.2" stroke-linejoin="round"/><path d="M2.6 5.8 Q1.2 7.2 2.6 8.6" fill="none" stroke="#e6e6e6" stroke-width="1"/></svg>
<svg class="a" style="left:12.8px;top:73.6px;" width="1.5" height="1.5" viewBox="0 0 1.5 1.5"><path d="M1.5 0 V1.5 H0z" fill="#a8a8a8"/></svg>
<svg class="a" style="left:4.55px;top:78.45px;" width="8.1" height="8.1" viewBox="0 0 9 9"><path d="M0.8 8.2 L5.8 3.2" stroke="#e6e6e6" stroke-width="1.9"/><path d="M7 0.2 V2.6 M5.8 1.4 H8.2 M8.2 3.6 V5 M7.5 4.3 H8.9 M4.2 0.6 V2 M3.5 1.3 H4.9" stroke="#e6e6e6" stroke-width="0.7"/></svg>
<svg class="a" style="left:12.8px;top:85.3px;" width="1.5" height="1.5" viewBox="0 0 1.5 1.5"><path d="M1.5 0 V1.5 H0z" fill="#a8a8a8"/></svg>
<svg class="a" style="left:4.05px;top:89.45px;" width="8.1" height="8.1" viewBox="0 0 9 9"><path d="M2.4 0.2 V6.6 H8.8 M0.2 2.4 H6.6 V8.8" fill="none" stroke="#e6e6e6" stroke-width="1.3"/></svg>
<svg class="a" style="left:12.8px;top:96.3px;" width="1.5" height="1.5" viewBox="0 0 1.5 1.5"><path d="M1.5 0 V1.5 H0z" fill="#a8a8a8"/></svg>
<svg class="a" style="left:4.05px;top:101.15px;" width="8.1" height="8.1" viewBox="0 0 9 9"><path d="M0.6 8.4 L1.8 7.2" stroke="#e6e6e6" stroke-width="1"/><path d="M1.6 7.4 L5.4 3.6" stroke="#e6e6e6" stroke-width="2"/><path d="M4.2 2.2 L6.8 4.8" stroke="#e6e6e6" stroke-width="1.2"/><path d="M6 3 L7.4 1.6" stroke="#e6e6e6" stroke-width="2.4" stroke-linecap="round"/></svg>
<svg class="a" style="left:12.8px;top:108.0px;" width="1.5" height="1.5" viewBox="0 0 1.5 1.5"><path d="M1.5 0 V1.5 H0z" fill="#a8a8a8"/></svg>
<svg class="a" style="left:4.15px;top:112.55px;" width="8.1" height="8.1" viewBox="0 0 9 9"><g transform="rotate(-40 4.5 4.5)"><rect x="-0.4" y="2.4" width="9.8" height="4.2" rx="1.8" fill="#e6e6e6"/><rect x="3" y="2.4" width="3" height="4.2" fill="#a4a4a4"/></g></svg>
<svg class="a" style="left:12.8px;top:119.39999999999999px;" width="1.5" height="1.5" viewBox="0 0 1.5 1.5"><path d="M1.5 0 V1.5 H0z" fill="#a8a8a8"/></svg>
<svg class="a" style="left:4.15px;top:124.25px;" width="8.1" height="8.1" viewBox="0 0 9 9"><path d="M8.4 0.6 L4.4 4.6" stroke="#e6e6e6" stroke-width="1.5"/><path d="M4 3.8 L5.4 5.2 Q4.4 8.4 0.4 8.8 Q2.4 7 2.2 5z" fill="#e6e6e6"/></svg>
<svg class="a" style="left:12.8px;top:131.10000000000002px;" width="1.5" height="1.5" viewBox="0 0 1.5 1.5"><path d="M1.5 0 V1.5 H0z" fill="#a8a8a8"/></svg>
<svg class="a" style="left:4.35px;top:134.95px;" width="8.1" height="8.1" viewBox="0 0 9 9"><path d="M3.6 0.6 H5.4 Q6.4 1.6 5.4 3 L5.2 4.4 H8 V6.2 H1 V4.4 H3.8 L3.6 3 Q2.6 1.6 3.6 0.6z" fill="#e6e6e6"/><rect x="1" y="7" width="7" height="1" fill="#e6e6e6"/></svg>
<svg class="a" style="left:12.8px;top:141.8px;" width="1.5" height="1.5" viewBox="0 0 1.5 1.5"><path d="M1.5 0 V1.5 H0z" fill="#a8a8a8"/></svg>
<svg class="a" style="left:4.15px;top:146.95px;" width="8.1" height="8.1" viewBox="0 0 9 9"><path d="M8.4 0.8 L4.8 4.4" stroke="#e6e6e6" stroke-width="1.4"/><path d="M4.4 3.8 L5.8 5.2 Q4.8 8.2 1.2 8.6 Q3 7 2.8 5z" fill="#e6e6e6"/><path d="M0.6 3.6 A2.5 2.5 0 0 1 4.6 1.4" fill="none" stroke="#e6e6e6" stroke-width="0.9"/><path d="M-0.2 2.6 L0.8 4.8 L2.2 3z" fill="#e6e6e6"/></svg>
<svg class="a" style="left:12.8px;top:153.8px;" width="1.5" height="1.5" viewBox="0 0 1.5 1.5"><path d="M1.5 0 V1.5 H0z" fill="#a8a8a8"/></svg>
<svg class="a" style="left:4.45px;top:158.35px;" width="8.1" height="8.1" viewBox="0 0 9 9"><path d="M4.8 1 L8.4 3.4 L5.4 6.6 H2.6 L1 5.2z" fill="#e6e6e6"/><path d="M2.6 4.4 L5 6.4" stroke="#777" stroke-width="0.6"/><path d="M0.6 7.6 H8" stroke="#e6e6e6" stroke-width="0.7"/></svg>
<svg class="a" style="left:12.8px;top:165.20000000000002px;" width="1.5" height="1.5" viewBox="0 0 1.5 1.5"><path d="M1.5 0 V1.5 H0z" fill="#a8a8a8"/></svg>
<svg class="a" style="left:4.2px;top:170.8px;" width="7.8" height="5.6" viewBox="0 0 7.8 5.6"><defs><linearGradient id="gg" x1="0" x2="1"><stop offset="0" stop-color="#3a3a3a"/><stop offset="1" stop-color="#e8e8e8"/></linearGradient></defs><rect x="0.4" y="0.4" width="7" height="4.8" fill="url(#gg)" stroke="#dadada" stroke-width="0.8"/></svg>
<svg class="a" style="left:12.8px;top:176.2px;" width="1.5" height="1.5" viewBox="0 0 1.5 1.5"><path d="M1.5 0 V1.5 H0z" fill="#a8a8a8"/></svg>
<svg class="a" style="left:4.35px;top:180.35px;" width="8.1" height="8.1" viewBox="0 0 9 9"><path d="M4.5 0.8 Q7.4 4.4 6.8 6.2 A2.5 2.5 0 0 1 2.2 6.2 Q1.6 4.4 4.5 0.8z" fill="#e6e6e6"/><path d="M3.6 6 A1.2 1.2 0 0 0 5.2 6.6" stroke="#666" stroke-width="0.6" fill="none"/></svg>
<svg class="a" style="left:12.8px;top:187.20000000000002px;" width="1.5" height="1.5" viewBox="0 0 1.5 1.5"><path d="M1.5 0 V1.5 H0z" fill="#a8a8a8"/></svg>
<svg class="a" style="left:4.15px;top:191.75px;" width="8.1" height="8.1" viewBox="0 0 9 9"><circle cx="5.4" cy="3.4" r="2.5" fill="#e6e6e6"/><path d="M3.8 5.2 L1 8.4" stroke="#e6e6e6" stroke-width="1.3"/></svg>
<svg class="a" style="left:12.8px;top:198.60000000000002px;" width="1.5" height="1.5" viewBox="0 0 1.5 1.5"><path d="M1.5 0 V1.5 H0z" fill="#a8a8a8"/></svg>
<svg class="a" style="left:4.15px;top:203.75px;" width="8.1" height="8.1" viewBox="0 0 9 9"><path d="M5.4 0.6 L8.2 3.6 L5.8 6.8 L0.8 8.4 L2.4 3.4z" fill="none" stroke="#e6e6e6" stroke-width="1.1" stroke-linejoin="round"/><circle cx="4.8" cy="4.4" r="1" fill="#e6e6e6"/><path d="M0.8 8.4 L4.4 4.8" stroke="#e6e6e6" stroke-width="0.7"/></svg>
<svg class="a" style="left:12.8px;top:210.60000000000002px;" width="1.5" height="1.5" viewBox="0 0 1.5 1.5"><path d="M1.5 0 V1.5 H0z" fill="#a8a8a8"/></svg>
<div class="a" style="left:1.2px;top:213.8px;width:13.4px;height:9.6px;background:#2b2b2b;"></div>
<div class="t" style="left:5.7px;top:213.84px;font-size:8.6px;line-height:10.32px;color:#f4f4f4;font-family:'Liberation Serif',serif;font-weight:bold;">T</div>
<svg class="a" style="left:12.8px;top:221px;" width="1.5" height="1.5" viewBox="0 0 1.5 1.5"><path d="M1.5 0 V1.5 H0z" fill="#a8a8a8"/></svg>
<svg class="a" style="left:4.55px;top:226.35px;" width="8.1" height="8.1" viewBox="0 0 9 9"><path d="M2.2 0.4 L2.2 7.6 L4 6 L5.4 8.8 L6.6 8.2 L5.2 5.6 L7.6 5.4z" fill="#111" stroke="#ededed" stroke-width="0.9" stroke-linejoin="round"/></svg>
<svg class="a" style="left:12.8px;top:233.20000000000002px;" width="1.5" height="1.5" viewBox="0 0 1.5 1.5"><path d="M1.5 0 V1.5 H0z" fill="#a8a8a8"/></svg>
<svg class="a" style="left:4.35px;top:237.45px;" width="8.1" height="8.1" viewBox="0 0 9 9"><path d="M0.4 7.6 L8.6 1.4" stroke="#e6e6e6" stroke-width="1.1"/></svg>
<svg class="a" style="left:12.8px;top:244.3px;" width="1.5" height="1.5" viewBox="0 0 1.5 1.5"><path d="M1.5 0 V1.5 H0z" fill="#a8a8a8"/></svg>
<svg class="a" style="left:4.05px;top:249.15px;" width="8.1" height="8.1" viewBox="0 0 9 9"><path d="M2.4 4.4 V2 Q2.9 1.2 3.4 2 V1 Q3.9 0.2 4.5 1 V0.9 Q5.1 0.2 5.6 1.1 V1.8 Q6.2 1.2 6.7 2 V5.6 Q6.6 8 4.6 8.2 Q2.8 8.2 2 6.6 L0.6 4.6 Q1 3.6 2.4 4.4z" fill="#e6e6e6"/></svg>
<svg class="a" style="left:12.8px;top:256.0px;" width="1.5" height="1.5" viewBox="0 0 1.5 1.5"><path d="M1.5 0 V1.5 H0z" fill="#a8a8a8"/></svg>
<svg class="a" style="left:4.25px;top:260.75px;" width="8.1" height="8.1" viewBox="0 0 9 9"><circle cx="3.4" cy="3.2" r="2.5" fill="none" stroke="#e6e6e6" stroke-width="1.1"/><path d="M5.2 5 L8 8" stroke="#e6e6e6" stroke-width="1.4"/></svg>
<svg class="a" style="left:4.9px;top:274.5px;" width="1.6" height="1.6" viewBox="0 0 1.6 1.6"><circle cx="0.8" cy="0.8" r="0.8" fill="#e6e6e6"/></svg>
<svg class="a" style="left:7.3999999999999995px;top:274.5px;" width="1.6" height="1.6" viewBox="0 0 1.6 1.6"><circle cx="0.8" cy="0.8" r="0.8" fill="#e6e6e6"/></svg>
<svg class="a" style="left:9.899999999999999px;top:274.5px;" width="1.6" height="1.6" viewBox="0 0 1.6 1.6"><circle cx="0.8" cy="0.8" r="0.8" fill="#e6e6e6"/></svg>
<svg class="a" style="left:12.8px;top:278.6px;" width="1.5" height="1.5" viewBox="0 0 1.5 1.5"><path d="M1.5 0 V1.5 H0z" fill="#a8a8a8"/></svg>
<svg class="a" style="left:2.4px;top:283px;" width="4" height="4.4" viewBox="0 0 4 4.4"><rect x="1.4" y="1.6" width="2.4" height="2.4" fill="#eee"/><rect x="0.2" y="0.2" width="2.4" height="2.4" fill="#111" stroke="#ddd" stroke-width="0.4"/></svg>
<svg class="a" style="left:8.8px;top:283px;" width="4.4" height="4.6" viewBox="0 0 4.4 4.6"><path d="M1 1.2 H3.2 V3.6" fill="none" stroke="#e6e6e6" stroke-width="0.7"/><path d="M0 1.2 L1.2 0.2 V2.2z M3.2 4.6 L2.2 3.4 H4.2z" fill="#e6e6e6"/></svg>
<div class="a" style="left:6.4px;top:295.5px;width:7.6px;height:7.4px;background:#ffffff;border:0.5px solid #cfcfcf;"></div>
<div class="a" style="left:1.6px;top:291.2px;width:8px;height:7.3px;background:#06857b;border:0.7px solid #b9c7c6;"></div>
<svg class="a" style="left:4px;top:307.7px;" width="8" height="6.6" viewBox="0 0 8 6.6"><rect x="0.4" y="0.4" width="7.2" height="5.8" fill="none" stroke="#e6e6e6" stroke-width="0.8"/><circle cx="4" cy="3.3" r="1.6" fill="none" stroke="#e6e6e6" stroke-width="0.6" stroke-dasharray="0.8 0.6"/></svg>
<svg class="a" style="left:4px;top:319.2px;" width="8.4" height="6.6" viewBox="0 0 8.4 6.6"><rect x="2.2" y="0.4" width="5.6" height="3.8" fill="none" stroke="#e6e6e6" stroke-width="0.8"/><rect x="0.4" y="2" width="5.6" height="3.8" fill="#535353" stroke="#e6e6e6" stroke-width="0.8"/></svg>
<svg class="a" style="left:12.8px;top:325.2px;" width="1.5" height="1.5" viewBox="0 0 1.5 1.5"><path d="M1.5 0 V1.5 H0z" fill="#a8a8a8"/></svg>
<svg class="a" style="left:0px;top:0px;" width="110" height="30" viewBox="0 0 110 30"><g fill="none">
<path d="M0.15 8 V21.2 Q0.15 26.6 5.6 26.6 H16.2 V8 H11.4 V18.3 A3.25 3.25 0 0 1 4.9 18.3 V8 Z" fill="#f7614a"/>
<path d="M41.4 26.6 V13.1 Q41.4 7.7 36 7.7 H24.7 V26.6 H29.6 V16 A3.5 3.5 0 0 1 36.6 16 V26.6 Z" fill="#0e83d8"/>
<path d="M51.42 7.4 V26.6" stroke="#0e83d8" stroke-width="4.95"/>
<path d="M77.50 13.51 A7.9 7.25 0 1 0 77.50 21.19" stroke="#0e83d8" stroke-width="4.8" stroke-linejoin="round"/>
<circle cx="96.35" cy="17.35" r="7.3" stroke="#0e83d8" stroke-width="4.85"/>
<path d="M103.65 7.8 V26.9" stroke="#0e83d8" stroke-width="4.9"/>
</g><ellipse cx="51.9" cy="4.45" rx="3.7" ry="2.05" fill="#0e83d8"/></svg>
</div>
</body>
</html>
